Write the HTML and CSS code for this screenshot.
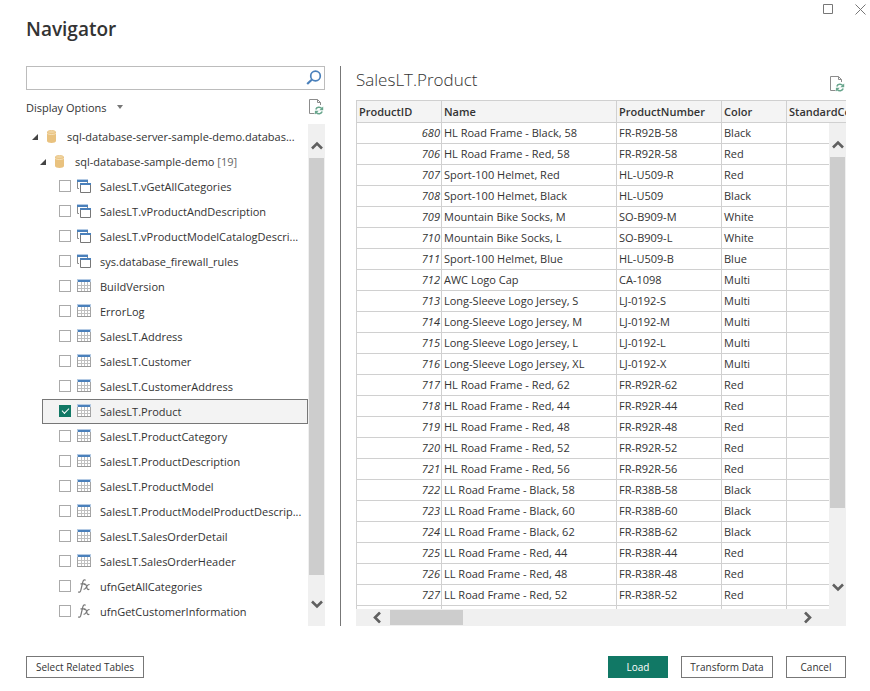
FILE: index.html
```html
<!DOCTYPE html>
<html lang="en">
<head>
<meta charset="utf-8">
<title>Navigator</title>
<link rel="stylesheet" href="styles.css">
<script src="navigator.js" defer></script>
</head>
<body>
<svg class="sprite" aria-hidden="true">
  <symbol id="database" viewBox="0 0 9 13">
    <path d="M0 2v9c0 2.600 9 2.600 9 0V2z" fill="#e9c27f"/>
    <ellipse cx="4.500" cy="2" rx="4.100" ry="1.600" fill="#efd3a0" stroke="#e9c27f" stroke-width=".8"/>
    <path d="M0 3c0 2 9 2 9 0" fill="none" stroke="#f7e7c8" stroke-width=".8"/>
  </symbol>
  <symbol id="expanded" viewBox="0 0 6 6"><path d="M6 0v6H0z" fill="#444"/></symbol>
  <symbol id="view" viewBox="0 0 15 15">
    <path d="M.5 3v6.500H2" fill="none" stroke="#8a8a8a"/>
    <path d="M0 0h11v1H0z" fill="#b5cbe4"/>
    <path d="M0 1h11v2H0z" fill="#4a80bb"/>
    <path d="M10 3h1v1h-1z" fill="#8a8a8a"/>
    <path d="M3.500 5.500h10v8h-10z" fill="#fff" stroke="#777"/>
    <path d="M3 4h11v2H3z" fill="#4a80bb"/>
  </symbol>
  <symbol id="table" viewBox="0 0 15 15">
    <path d="M.5 1.500h13v11H.5z" fill="#fff" stroke="#a4a4a4"/>
    <path d="M4.500 3v9M7.500 3v9M10.500 3v9M1 6.500h12M1 9.500h12" stroke="#c0c0c0"/>
    <path d="M0 12.500h14" stroke="#999"/>
    <path d="M0 0h14v3H0z" fill="#b5cbe4"/>
    <path d="M1 1h12v2H1z" fill="#4a80bb"/>
  </symbol>
  <symbol id="function" viewBox="0 0 15 15">
    <path d="M8.600 1.400C7.500.1 6.200 1.100 5.700 3.300L3.900 11c-.4 1.900-1.400 2.600-2.700 1.700M3.500 4.800h4.300" fill="none" stroke="#777" stroke-width="1.200"/>
    <path d="M7 5.700c1.200-1.100 1.800-.5 2.200.8l.9 2.800c.4 1.400 1.100 1.700 2.200.5M12.500 5.600C10.800 4.800 9.500 7.800 8.800 9c-.6 1-1.200 1.500-2.200 1" fill="none" stroke="#777" stroke-width="1.200"/>
  </symbol>
  <symbol id="refresh" viewBox="0 0 15 16">
    <path d="M5.500 14.500H.5V.5h8l3 3V6M8.500.5v3h3" fill="none" stroke="#8c8c8c"/>
    <path d="M6.800 10.500c.8-2.400 4.200-3 6-.9M13.200 12.500c-.8 2.400-4.200 3-6 .9" fill="none" stroke="#67a58c" stroke-width="1.500"/>
    <path d="M14.200 7.400v3.800h-3.900zM5.900 15.500v-3.800h3.900z" fill="#67a58c"/>
  </symbol>
  <symbol id="chevron" viewBox="0 0 12 9"><path d="M1 7.500l5-5 5 5" fill="none" stroke="#606060" stroke-width="2.600"/></symbol>
</svg>

<main class="dialog">
  <header class="titlebar">
    <h1>Navigator</h1>
    <div class="window-controls">
      <button type="button" aria-label="Maximize"><svg width="11" height="11"><path d="M.5.5h9v9H.5z" fill="none" stroke="#777"/></svg></button>
      <button type="button" aria-label="Close"><svg width="11" height="11"><path d="M.5.500l10 10m0-10l-10 10" fill="none" stroke="#777"/></svg></button>
    </div>
  </header>

  <div class="panes">
    <section class="browser">
      <div class="search">
        <input type="text" aria-label="Search">
        <button type="button" aria-label="Search"><svg width="16" height="16"><circle cx="9.500" cy="6" r="4.800" fill="none" stroke="#4a80bb" stroke-width="1.700"/><path d="M6 9.500L1.200 14" stroke="#4a80bb" stroke-width="2.200"/></svg></button>
      </div>
      <div class="options">
        <button type="button" class="display-options">Display Options <svg width="6" height="4"><path d="M0 0h6L3 4z" fill="#777"/></svg></button>
        <button type="button" aria-label="Refresh"><svg width="15" height="16"><use href="#refresh"/></svg></button>
      </div>
      <div class="tree-frame">
        <div class="tree" id="tree">
          <div class="node server"><svg class="twisty"><use href="#expanded"/></svg><svg class="db"><use href="#database"/></svg><span>sql-database-server-sample-demo.databas...</span></div>
          <div class="node database"><svg class="twisty"><use href="#expanded"/></svg><svg class="db"><use href="#database"/></svg><span>sql-database-sample-demo <span class="count">[19]</span></span></div>
        </div>
        <div class="scroll vertical">
          <button type="button" aria-label="Scroll up"><svg><use href="#chevron"/></svg></button>
          <div class="track"><div class="thumb tree-thumb"></div></div>
          <button type="button" class="end" aria-label="Scroll down"><svg><use href="#chevron"/></svg></button>
        </div>
      </div>
    </section>

    <section class="preview">
      <div class="preview-head">
        <h2>SalesLT.Product</h2>
        <button type="button" aria-label="Refresh preview"><svg width="15" height="16"><use href="#refresh"/></svg></button>
      </div>
      <div class="grid">
        <div class="viewport">
          <table>
            <colgroup><col class="c-id"><col class="c-name"><col class="c-number"><col class="c-color"><col class="c-cost"></colgroup>
            <thead><tr><th>ProductID</th><th>Name</th><th>ProductNumber</th><th>Color</th><th>StandardCost</th></tr></thead>
            <tbody id="rows"></tbody>
          </table>
        </div>
        <div class="scroll vertical">
          <button type="button" aria-label="Scroll up"><svg><use href="#chevron"/></svg></button>
          <div class="track"><div class="thumb grid-thumb"></div></div>
          <button type="button" class="end" aria-label="Scroll down"><svg><use href="#chevron"/></svg></button>
        </div>
        <div class="scroll horizontal">
          <button type="button" aria-label="Scroll left"><svg><use href="#chevron"/></svg></button>
          <div class="track"><div class="thumb column-thumb"></div></div>
          <button type="button" class="end" aria-label="Scroll right"><svg><use href="#chevron"/></svg></button>
        </div>
      </div>
    </section>
  </div>

  <footer class="actions">
    <button type="button" class="button related">Select Related Tables</button>
    <button type="button" class="button primary">Load</button>
    <button type="button" class="button transform">Transform Data</button>
    <button type="button" class="button">Cancel</button>
  </footer>
</main>
</body>
</html>
```
FILE: styles.css
```css
* { box-sizing: border-box; }

body {
  margin: 0;
  background: #fff;
  color: #333;
  font-family: "Open Sans", "Noto Sans", sans-serif;
  font-size: 11px;
}

button {
  padding: 0;
  border: 0;
  background: none;
  color: inherit;
  font: inherit;
}

svg { display: block; flex: none; }
.sprite { display: none; }

.dialog {
  display: grid;
  grid-template-rows: 66px minmax(0, 1fr) 22px;
  height: 100vh;
  padding-bottom: 13px;
}

.titlebar {
  display: flex;
  justify-content: space-between;
  align-items: flex-start;
  padding: 4px 4px 0 26px;
}

h1 {
  margin: 10px 0 0;
  font-size: 19px;
  line-height: 30px;
  font-weight: 600;
}

.window-controls { display: flex; gap: 21px; }

.panes {
  display: grid;
  grid-template-columns: 315px minmax(0, 1fr);
  margin: 0 24px 30px 26px;
}

.browser {
  display: grid;
  grid-template: 24px 34px minmax(0, 1fr) / minmax(0, 1fr);
  min-height: 0;
  padding-right: 15px;
  border-right: 1px solid #777;
}

.search {
  display: flex;
  align-items: center;
  padding-right: 2px;
  border: 1px solid #bcbcbc;
}

.search input {
  flex: 1;
  min-width: 0;
  height: 22px;
  padding: 0 4px;
  border: 0;
  outline: 0;
  font: inherit;
}

.options {
  display: flex;
  justify-content: space-between;
  align-items: center;
  padding-right: 1px;
}

.display-options { display: flex; align-items: center; gap: 10px; }

.tree-frame { display: flex; min-height: 0; }
.tree { flex: 1; min-width: 0; overflow: hidden; }

.node {
  display: flex;
  align-items: center;
  height: 25px;
  border: 1px solid transparent;
  white-space: nowrap;
}

.server { padding-left: 5px; }
.database { padding-left: 13px; }
.twisty { width: 6px; height: 6px; margin-right: 9px; }
.db { width: 9px; height: 13px; margin-right: 11px; }
.count { color: #666; }

.item { margin-left: 16px; padding-left: 16px; }
.item.selected { border-color: #777; background: #f3f3f3; }

.item input {
  appearance: none;
  display: grid;
  flex: none;
  width: 12px;
  height: 12px;
  margin: 0 6px 1px 0;
  border: 1px solid #aaa;
  background: #fff;
}

.item input:checked { border-color: #117865; background: #117865; }

.item input:checked::before {
  content: "";
  width: 6px;
  height: 3px;
  margin: 2px;
  border: solid #fff;
  border-width: 0 0 1px 1px;
  transform: rotate(-45deg);
}

.item label { display: flex; align-items: center; }
.icon { width: 15px; height: 15px; margin-right: 8px; }

.scroll { display: flex; background: #f0f0f0; }
.vertical { flex-direction: column; width: 17px; }
.scroll button { display: flex; flex: none; justify-content: center; align-items: center; }
.scroll svg { width: 12px; height: 9px; }
.vertical button { height: 34px; padding-top: 8px; }
.vertical .end { padding: 0 0 10px; }
.horizontal button { width: 34px; padding-left: 8px; }
.horizontal .end { padding: 0 8px 0 0; }
.end svg { transform: rotate(180deg); }
.horizontal svg { transform: rotate(-90deg); }
.horizontal .end svg { transform: rotate(90deg); }
.track { flex: 1; min-width: 0; min-height: 0; }
.thumb { background: #cdcdcd; }
.vertical .thumb { margin: 0 1px; }
.tree-thumb { height: 96%; }
.grid-thumb { height: 84%; }
.horizontal .thumb { height: 15px; margin: 1px 0; }
.column-thumb { width: 18%; }

.preview {
  display: grid;
  grid-template: 34px minmax(0, 1fr) / minmax(0, 1fr);
  min-height: 0;
  padding-left: 15px;
}

.preview-head {
  display: flex;
  justify-content: space-between;
  align-items: flex-end;
  padding: 0 1px 8px 0;
}

h2 {
  margin: 0;
  font-size: 17px;
  line-height: 24px;
  font-weight: 300;
}

.grid {
  display: grid;
  grid-template: 23px minmax(0, 1fr) 17px / minmax(0, 1fr) 17px;
  min-height: 0;
}

.viewport {
  grid-area: 1 / 1 / 3 / 3;
  overflow: hidden;
  border-top: 1px solid #d0d0d0;
  border-left: 1px solid #d0d0d0;
}

.grid .vertical { grid-area: 2 / 2; }
.grid .horizontal { grid-area: 3 / 1 / 4 / 3; padding-right: 17px; }

table {
  width: 550px;
  table-layout: fixed;
  border-spacing: 0;
  font-size: 11px;
}

.c-id { width: 85px; }
.c-name { width: 175px; }
.c-number { width: 105px; }
.c-color { width: 65px; }
.c-cost { width: 120px; }

th, td {
  height: 21px;
  padding: 0 2px;
  border: solid #d0d0d0;
  border-width: 0 1px 1px 0;
  line-height: 20px;
  text-align: left;
  white-space: nowrap;
}

th { height: 22px; background: #f4f4f4; font-weight: 600; }
td:first-child { padding-right: 1px; font-style: italic; text-align: right; }

.actions {
  display: flex;
  gap: 13px;
  padding: 0 24px 0 26px;
  font-size: 10px;
}

.button {
  min-width: 60px;
  padding: 0 8px;
  border: 1px solid #777;
  background: #fff;
}

.related { min-width: 118px; margin-right: auto; }
.transform { min-width: 92px; }
.primary { border-color: #117865; background: #117865; color: #fff; }
```
FILE: navigator.js
```js
const items = [
  ["view", "SalesLT.vGetAllCategories"],
  ["view", "SalesLT.vProductAndDescription"],
  ["view", "SalesLT.vProductModelCatalogDescri..."],
  ["view", "sys.database_firewall_rules"],
  ["table", "BuildVersion"],
  ["table", "ErrorLog"],
  ["table", "SalesLT.Address"],
  ["table", "SalesLT.Customer"],
  ["table", "SalesLT.CustomerAddress"],
  ["table", "SalesLT.Product"],
  ["table", "SalesLT.ProductCategory"],
  ["table", "SalesLT.ProductDescription"],
  ["table", "SalesLT.ProductModel"],
  ["table", "SalesLT.ProductModelProductDescrip..."],
  ["table", "SalesLT.SalesOrderDetail"],
  ["table", "SalesLT.SalesOrderHeader"],
  ["function", "ufnGetAllCategories"],
  ["function", "ufnGetCustomerInformation"]
];

const products = [
  [680, "HL Road Frame - Black, 58", "FR-R92B-58", "Black"],
  [706, "HL Road Frame - Red, 58", "FR-R92R-58", "Red"],
  [707, "Sport-100 Helmet, Red", "HL-U509-R", "Red"],
  [708, "Sport-100 Helmet, Black", "HL-U509", "Black"],
  [709, "Mountain Bike Socks, M", "SO-B909-M", "White"],
  [710, "Mountain Bike Socks, L", "SO-B909-L", "White"],
  [711, "Sport-100 Helmet, Blue", "HL-U509-B", "Blue"],
  [712, "AWC Logo Cap", "CA-1098", "Multi"],
  [713, "Long-Sleeve Logo Jersey, S", "LJ-0192-S", "Multi"],
  [714, "Long-Sleeve Logo Jersey, M", "LJ-0192-M", "Multi"],
  [715, "Long-Sleeve Logo Jersey, L", "LJ-0192-L", "Multi"],
  [716, "Long-Sleeve Logo Jersey, XL", "LJ-0192-X", "Multi"],
  [717, "HL Road Frame - Red, 62", "FR-R92R-62", "Red"],
  [718, "HL Road Frame - Red, 44", "FR-R92R-44", "Red"],
  [719, "HL Road Frame - Red, 48", "FR-R92R-48", "Red"],
  [720, "HL Road Frame - Red, 52", "FR-R92R-52", "Red"],
  [721, "HL Road Frame - Red, 56", "FR-R92R-56", "Red"],
  [722, "LL Road Frame - Black, 58", "FR-R38B-58", "Black"],
  [723, "LL Road Frame - Black, 60", "FR-R38B-60", "Black"],
  [724, "LL Road Frame - Black, 62", "FR-R38B-62", "Black"],
  [725, "LL Road Frame - Red, 44", "FR-R38R-44", "Red"],
  [726, "LL Road Frame - Red, 48", "FR-R38R-48", "Red"],
  [727, "LL Road Frame - Red, 52", "FR-R38R-52", "Red"],
  ["", "", "", ""]
];

document.getElementById("tree").insertAdjacentHTML("beforeend", items.map(([icon, name], i) => {
  const chosen = name === "SalesLT.Product";
  return `<div class="node item${chosen ? " selected" : ""}"><input type="checkbox" id="item-${i}"${chosen ? " checked" : ""}><label for="item-${i}"><svg class="icon"><use href="#${icon}"/></svg>${name}</label></div>`;
}).join(""));

document.getElementById("rows").innerHTML = products.map(row =>
  `<tr>${row.map(cell => `<td>${cell}</td>`).join("")}<td></td></tr>`
).join("");
```
